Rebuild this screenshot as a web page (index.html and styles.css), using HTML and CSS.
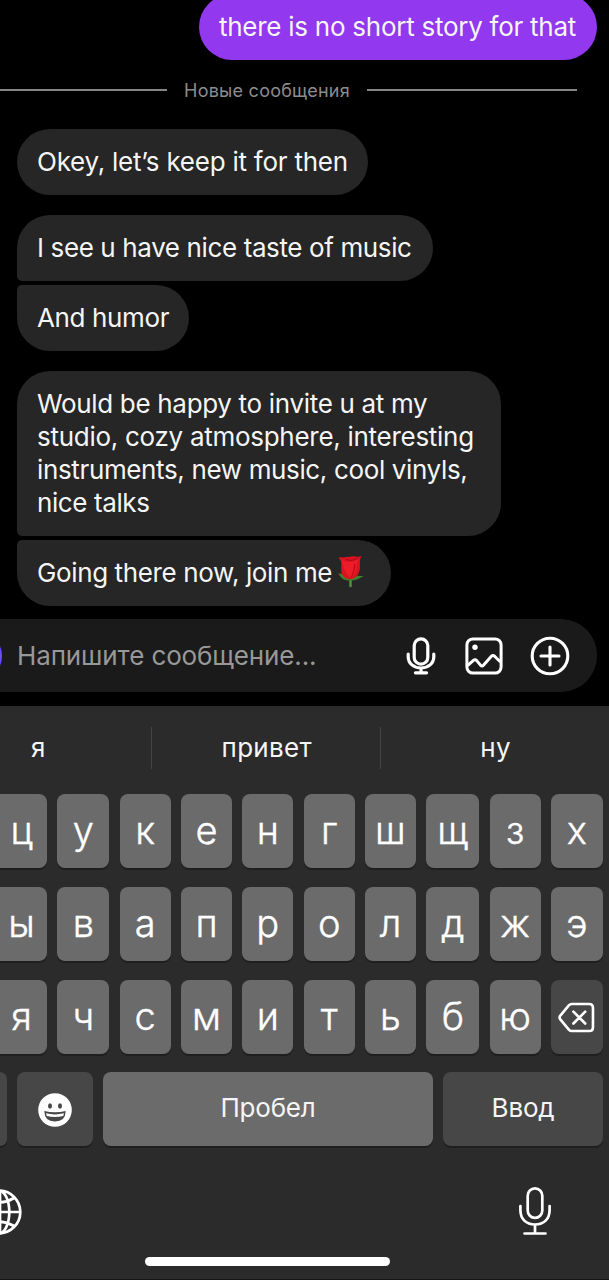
FILE: index.html
```html
<!DOCTYPE html>
<html lang="ru">
<head>
<meta charset="utf-8">
<title>Чат</title>
<link rel="stylesheet" href="styles.css">
</head>
<body>
<div class="screen">
  <main class="chat">
    <div class="bubble sent"><span class="t1">there is no short story for that</span></div>
    <div class="divider"><i class="rule-left"></i><span>Новые сообщения</span><i class="rule-right"></i></div>
    <div class="bubble first"><span class="t2">Okey, let’s keep it for then</span></div>
    <div class="bubble group-top w-music"><span class="t3">I see u have nice taste of music</span></div>
    <div class="bubble group-end w-humor"><span class="t4">And humor</span></div>
    <div class="bubble group-top w-invite">
      <span class="t5">Would be happy to invite u at my</span><br>
      <span class="t6">studio, cozy atmosphere, interesting</span><br>
      <span class="t7">instruments, new music, cool vinyls,</span><br>
      <span class="t8">nice talks</span>
    </div>
    <div class="bubble group-end w-join"><span class="t9">Going there now, join me</span>
      <svg class="rose" viewBox="0 0 28 34">
        <path d="M13.5 21V32" stroke="#4d9636" stroke-width="2.6" stroke-linecap="round"/>
        <path d="M13 26C7 27 3 23 1 19C5 19 9 21 13 25C17 21 22 21 27 22C23 24 18 27 13 26Z" fill="#3f812d"/>
        <path d="M3 2C6 4 8 1 12 2C17 0 20 3 25 1C22 5 24 10 23 15C22 21 18 25 13 25C7 25 3 20 4 13C4 9 5 6 1 3Z" fill="#d91420"/>
        <path d="M4 5C9 8 15 8 22 4C19 10 21 18 14 24C7 19 6 10 4 5Z" fill="#ec1c28"/>
        <path d="M8 4C12 6 17 6 21 3M18 9C17 15 17 19 14 23" fill="none" stroke="#b50a1a" stroke-width="1.1"/>
      </svg>
    </div>
  </main>
  <div class="composer">
    <i class="camera"></i>
    <span class="placeholder">Напишите сообщение...</span>
    <svg class="ic-mic" viewBox="0 0 30 38"><g fill="none" stroke="#fff" stroke-width="3.2" stroke-linecap="round"><rect x="8.2" y="1.8" width="13.6" height="25.4" rx="6.8"/><path d="M2.2 17V19.4C2.2 26.6 7.8 31 15 31S27.800 26.600 27.800 19.400V17M15 31V35.600M9.400 35.800H20.600"/></g></svg>
    <svg class="ic-pic" viewBox="0 0 38 38"><g fill="none" stroke="#fff" stroke-width="3" stroke-linejoin="round"><rect x="1.900" y="1.900" width="34.200" height="34.200" rx="6"/><path d="M2.500 28.500L8.500 23.300Q10.200 22 11.700 23.600L15.700 28.400Q17 29.700 18.400 28.200L26.400 19.200Q28 17.800 29.600 19.200L35.500 25"/></g><circle cx="10" cy="10.300" r="2.700" fill="#fff"/></svg>
    <svg class="ic-plus" viewBox="0 0 40 40"><g fill="none" stroke="#fff" stroke-width="3.100" stroke-linecap="round"><circle cx="20" cy="20" r="17.800"/><path d="M20 11V29M11 20H29"/></g></svg>
  </div>
  <section class="keyboard">
    <div class="suggest"><span>я</span><span>привет</span><span>ну</span></div>
    <div class="row"><b>ц</b><b>у</b><b>к</b><b>е</b><b>н</b><b>г</b><b>ш</b><b>щ</b><b>з</b><b>х</b></div>
    <div class="row"><b>ы</b><b>в</b><b>а</b><b>п</b><b>р</b><b>о</b><b>л</b><b>д</b><b>ж</b><b>э</b></div>
    <div class="row"><b>я</b><b>ч</b><b>с</b><b>м</b><b>и</b><b>т</b><b>ь</b><b>б</b><b>ю</b><b class="dark"><svg class="ic-del" viewBox="0 0 38 32"><g fill="none" stroke="#fff" stroke-width="2.700" stroke-linecap="round" stroke-linejoin="round"><path d="M14 2H32Q36 2 36 6V26Q36 30 32 30H14Q12.500 30 11.300 28.800L2.300 18Q.8 16 2.300 14L11.300 3.200Q12.500 2 14 2Z"/><path d="M15.800 10L28 22.200M28 10L15.800 22.200"/></g></svg></b></div>
    <div class="row bottom"><b class="dark num"></b><b class="dark"><svg class="ic-smile" viewBox="0 0 34 34"><circle cx="17" cy="17" r="16.800" fill="#fff"/><ellipse cx="12" cy="13" rx="2" ry="2.700" fill="#474747"/><ellipse cx="22" cy="13" rx="2" ry="2.700" fill="#474747"/><path d="M6.300 18Q17 20.500 27.700 18Q27.500 28.500 17 28.500T6.300 18Z" fill="#474747"/><path d="M8 20.300Q17 22.600 26 20.300L25.300 23Q17 25 8.700 23Z" fill="#fff"/></svg></b><b class="label space">Пробел</b><b class="label dark">Ввод</b></div>
    <div class="tools">
      <svg class="ic-globe" viewBox="0 0 22 46"><g fill="none" stroke="#fff" stroke-width="2.700"><circle cx="-1" cy="23" r="21.300"/><ellipse cx="-1" cy="23" rx="10.300" ry="21.300"/><path d="M0 23H20M0 2V44M-16 9Q-1 18 14 9M-16 37Q-1 28 14 37"/></g></svg>
      <svg class="ic-dictate" viewBox="0 0 32 48"><g fill="none" stroke="#fff" stroke-width="2.700" stroke-linecap="round"><rect x="8.700" y="1.400" width="14.600" height="29.500" rx="7.300"/><path d="M1.400 19V23C1.400 32 7 37.500 16 37.500S30.600 32 30.600 23V19M16 37.500V46M5.500 46.500H26.500"/></g></svg>
    </div>
    <div class="home"></div>
  </section>
</div>
</body>
</html>
```
FILE: styles.css
```css
* { box-sizing: border-box; }
body { margin: 0; background: #000; }
.screen {
  width: 609px; height: 1280px; overflow: hidden;
  display: flex; flex-direction: column;
  background: #000; color: #f5f5f5;
  font-family: Inter, "Noto Sans", sans-serif;
}
svg { display: block; flex: none; }
.chat {
  height: 619px; flex: none; padding-left: 17px;
  display: flex; flex-direction: column; align-items: flex-start;
}
.bubble {
  flex: none; padding: 16px 0 17px 20px; background: #262626;
  border-radius: 33px; font-size: 26px; line-height: 33px; white-space: nowrap;
}
.t1 { letter-spacing: -.26px; }
.t2 { letter-spacing: -.24px; }
.t3 { letter-spacing: -.38px; }
.t4 { letter-spacing: -.36px; }
.t5 { letter-spacing: -.32px; }
.t6 { letter-spacing: -.28px; }
.t7 { letter-spacing: -.36px; }
.t8 { letter-spacing: -.4px; }
.t9 { letter-spacing: -.38px; }
.sent { align-self: flex-end; width: 398px; margin: -6px 12px 0 0; background: #9238ee; }
.divider {
  display: flex; align-items: center; height: 30px; margin: 15px 0 0 -17px;
  color: #8c8c8c; font-size: 18px; white-space: nowrap;
}
.divider i { height: 2px; background: #858585; }
.divider span { width: 200px; text-align: center; letter-spacing: .24px; }
.rule-left { width: 167px; }
.rule-right { width: 210px; }
.first { width: 351px; margin-top: 23.500px; }
.group-top { margin-top: 20px; border-bottom-left-radius: 5px; }
.group-end { margin-top: 4px; border-top-left-radius: 5px; }
.w-music { width: 415.500px; }
.w-humor { width: 172px; }
.w-invite { width: 483.500px; }
.w-join { width: 374px; display: flex; align-items: center; }
.rose { width: 28px; height: 33px; margin: -1px 0 0 5px; }
.composer {
  position: relative; flex: none; width: 597px; height: 73px; padding-left: 17px;
  display: flex; align-items: center; background: #1a1a1a; border-radius: 0 36px 36px 0;
}
.camera { position: absolute; left: -50px; top: 11px; width: 52px; height: 52px; border-radius: 50%; background: #6a4cff; }
.placeholder { width: 389px; font-size: 26px; line-height: 33px; letter-spacing: -.12px; color: #989898; white-space: nowrap; }
.ic-mic { width: 30px; height: 38px; }
.ic-pic { width: 38px; height: 38px; margin-left: 28.500px; }
.ic-plus { width: 40px; height: 40px; margin-left: 27.500px; }
.keyboard { flex: none; margin-top: 13.500px; height: 574.500px; background: #2b2b2b; border-bottom: 1px solid #161616; }
.suggest { display: flex; align-items: center; height: 88.500px; margin-left: -76px; padding-bottom: 3px; }
.suggest span { width: 228.500px; height: 42px; line-height: 42px; text-align: center; font-size: 26px; letter-spacing: .3px; border-right: 1px solid #444; padding-left: 1.500px; }
.suggest span:last-child { border: 0; }
.row {
  display: grid; grid-template-columns: 47px 52px repeat(5, 51px) 53px 51px 52px;
  column-gap: 10.330px; height: 74px; margin-bottom: 18.800px;
}
.row b {
  display: flex; align-items: center; justify-content: center;
  background: #6b6b6b; border-radius: 8px; box-shadow: 0 2px 0 #1f1f1f;
  color: #fff; font-weight: 300; font-size: 38px; line-height: 46px; padding-bottom: 2px;
  -webkit-text-stroke: .4px #fff;
}
.row b:first-child { border-radius: 0 8px 8px 0; padding-right: 4px; }
.row .dark { background: #474747; }
.bottom { grid-template-columns: 7px 76px 330px 160px; column-gap: 10px; margin-bottom: 0; }
.row .label { font-size: 26px; font-weight: 400; color: #f5f5f5; letter-spacing: -.2px; -webkit-text-stroke: 0; }
.ic-del { width: 37px; height: 31px; margin-top: 4px; }
.ic-smile { width: 34px; height: 34px; margin-top: 3px; }
.tools { display: flex; justify-content: space-between; margin-top: 41px; padding-right: 58px; height: 48px; }
.ic-globe { width: 22px; height: 46px; margin-top: 2px; }
.ic-dictate { width: 32px; height: 48px; }
.home { width: 245px; height: 9px; margin: 22px 0 0 144.500px; border-radius: 5px; background: #fff; }
```
